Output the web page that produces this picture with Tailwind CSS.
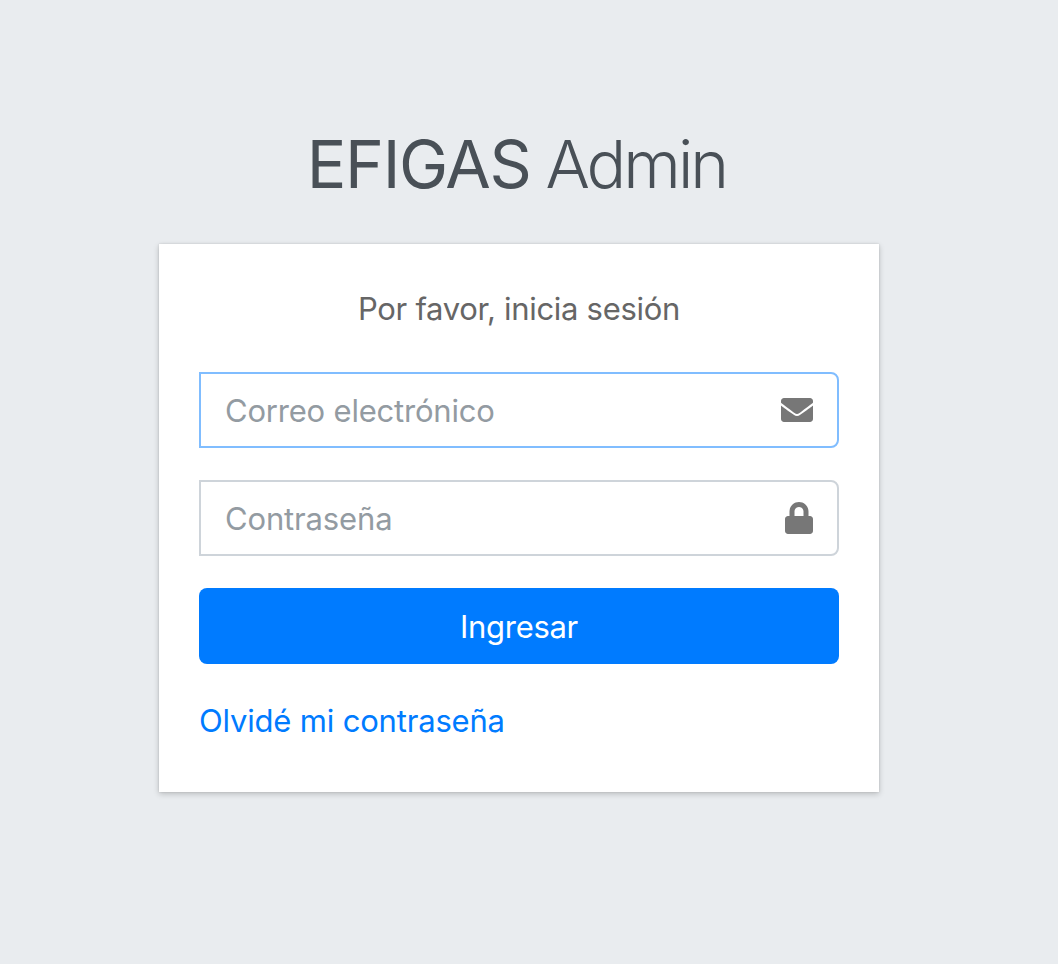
<!DOCTYPE html>
<html lang="es">
<head>
<meta charset="utf-8">
<title>EFIGAS Admin</title>
<script src="https://cdn.jsdelivr.net/npm/@tailwindcss/browser@4"></script>
</head>
<body class="bg-[#e9ecef] font-['Inter',sans-serif] w-[1058px] h-[964px] overflow-hidden">
<main class="w-[720px] ml-[159px] pt-[112px]">
  <h1 class="h-[132px] flex justify-center gap-[15px] pr-[5px] whitespace-nowrap text-[66px] leading-[105px] text-[#495057]"><span class="font-normal tracking-[-1.4px]">EFIGAS</span><span class="font-light tracking-[-3px]">Admin</span></h1>
  <section class="h-[548px] bg-white px-10 pt-10 shadow-[0_0_2px_rgba(0,0,0,0.125),0_2px_6px_rgba(0,0,0,0.2)] text-[31px] leading-[50px] tracking-[-0.3px]">
    <p class="text-center text-[#666] h-[88px]">Por favor, inicia sesión</p>
    <form>
      <div class="h-[76px] mb-8 border-2 border-[#80bdff] rounded-r-lg flex items-center pl-6 pr-6">
        <input type="email" placeholder="Correo electrónico" class="flex-1 min-w-0 h-[50px] mt-0.5 outline-none tracking-[-0.2px] placeholder:text-[#939ba2]">
        <svg class="w-8 h-8" viewBox="0 0 512 512" fill="#777"><path d="M502.3 190.8c3.9-3.1 9.7-.2 9.7 4.7V400c0 26.5-21.5 48-48 48H48c-26.5 0-48-21.5-48-48V195.600c0-5 5.700-7.800 9.700-4.700 22.400 17.400 52.100 39.500 154.100 113.600 21.100 15.400 56.700 47.800 92.200 47.600 35.700.3 72-32.800 92.300-47.600 102-74.100 131.600-96.300 154-113.700zM256 320c23.200.4 56.600-29.200 73.400-41.400 132.700-96.300 142.800-104.700 173.400-128.700 5.800-4.500 9.200-11.500 9.200-18.900v-19c0-26.500-21.500-48-48-48H48c-26.500 0-48 21.500-48 48v19c0 7.400 3.400 14.300 9.200 18.900 30.600 23.900 40.700 32.400 173.400 128.700 16.800 12.200 50.200 41.800 73.400 41.400z"/></svg>
      </div>
      <div class="h-[76px] mb-8 border-2 border-[#ced4da] rounded-r-lg flex items-center pl-6 pr-6">
        <input type="password" placeholder="Contraseña" class="flex-1 min-w-0 h-[50px] mt-0.5 outline-none tracking-[-0.15px] placeholder:text-[#939ba2]">
        <svg class="w-7 h-8" viewBox="0 0 448 512" fill="#777"><path d="M400 224h-24v-72C376 68.200 307.800 0 224 0S72 68.200 72 152v72H48c-26.500 0-48 21.500-48 48v192c0 26.500 21.500 48 48 48h352c26.500 0 48-21.500 48-48V272c0-26.500-21.500-48-48-48zm-104 0H152v-72c0-39.700 32.300-72 72-72s72 32.300 72 72v72z"/></svg>
      </div>
      <button type="button" class="block w-full h-[76px] pt-0.5 rounded-lg bg-[#007bff] text-white">Ingresar</button>
    </form>
    <p class="mt-8 text-[#007bff] tracking-[-0.18px]"><a>Olvidé mi contraseña</a></p>
  </section>
</main>
</body>
</html>
